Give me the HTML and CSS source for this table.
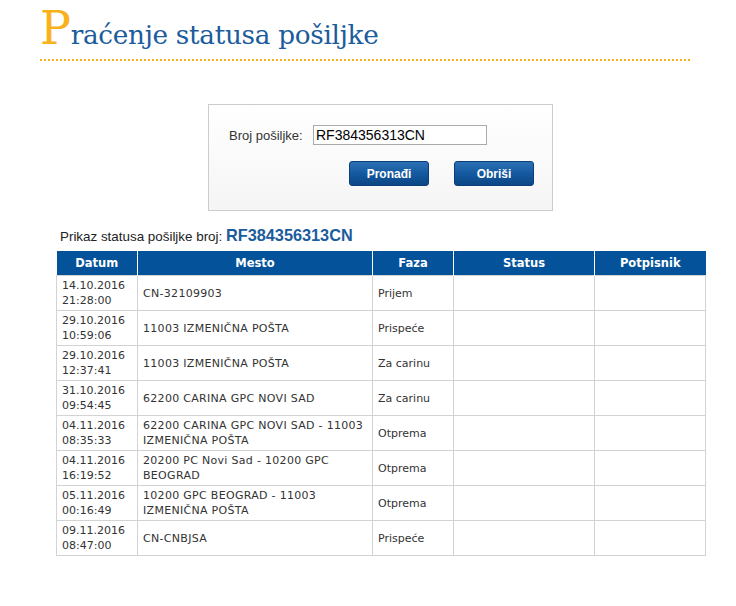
FILE: index.html
```html
<!DOCTYPE html>
<html lang="sr">
<head>
<meta charset="utf-8">
<title>Praćenje statusa pošiljke</title>
<link rel="stylesheet" href="styles.css">
</head>
<body>
<div class="page">
  <h1 class="title"><span class="cap">P</span>raćenje statusa pošiljke</h1>
  <div class="search">
    <div class="field-row">
      <label class="label" for="broj">Broj pošiljke:</label>
      <input class="input" id="broj" type="text" value="RF384356313CN">
    </div>
    <div class="btn-row">
      <button class="btn">Pronađi</button>
      <button class="btn">Obriši</button>
    </div>
  </div>
  <div class="results">
    <p class="caption">Prikaz statusa pošiljke broj: <span class="num">RF384356313CN</span></p>
    <table class="grid">
      <colgroup>
        <col class="c-date"><col class="c-place"><col class="c-phase"><col class="c-status"><col class="c-sign">
      </colgroup>
      <thead>
        <tr><th>Datum</th><th>Mesto</th><th>Faza</th><th>Status</th><th>Potpisnik</th></tr>
      </thead>
      <tbody>
        <tr><td>14.10.2016<br>21:28:00</td><td class="place">CN-32109903</td><td>Prijem</td><td></td><td></td></tr>
        <tr><td>29.10.2016<br>10:59:06</td><td class="place">11003 IZMENIČNA POŠTA</td><td>Prispeće</td><td></td><td></td></tr>
        <tr><td>29.10.2016<br>12:37:41</td><td class="place">11003 IZMENIČNA POŠTA</td><td>Za carinu</td><td></td><td></td></tr>
        <tr><td>31.10.2016<br>09:54:45</td><td class="place">62200 CARINA GPC NOVI SAD</td><td>Za carinu</td><td></td><td></td></tr>
        <tr><td>04.11.2016<br>08:35:33</td><td class="place">62200 CARINA GPC NOVI SAD - 11003 IZMENIČNA POŠTA</td><td>Otprema</td><td></td><td></td></tr>
        <tr><td>04.11.2016<br>16:19:52</td><td class="place">20200 PC Novi Sad - 10200 GPC BEOGRAD</td><td>Otprema</td><td></td><td></td></tr>
        <tr><td>05.11.2016<br>00:16:49</td><td class="place">10200 GPC BEOGRAD - 11003 IZMENIČNA POŠTA</td><td>Otprema</td><td></td><td></td></tr>
        <tr><td>09.11.2016<br>08:47:00</td><td class="place">CN-CNBJSA</td><td>Prispeće</td><td></td><td></td></tr>
      </tbody>
    </table>
  </div>
</div>
</body>
</html>
```
FILE: styles.css
```css
html, body { margin: 0; padding: 0; background: #fff; }
.page { width: 681px; padding-left: 40px; padding-top: 5px; }
.title {
  margin: 0;
  width: 650px;
  font-family: "DejaVu Serif", Georgia, serif;
  font-weight: normal;
  font-size: 26.3px;
  line-height: 46px;
  color: #1b5c9c;
  border-bottom: 2px dotted #f9b21b;
  padding-bottom: 1px;
  letter-spacing: -0.3px;
}
.cap { font-size: 46px; color: #f9b21b; }
.search {
  width: 343px;
  height: 105px;
  margin: 43px auto 0;
  border: 1px solid #ccc;
  background: linear-gradient(#fff, #f5f5f5);
  font-family: "Liberation Sans", Arial, sans-serif;
  box-sizing: content-box;
}
.field-row { display: flex; align-items: center; padding: 20px 0 0 20px; }
.label { font-size: 13px; color: #333; width: 84px; flex: none; }
.input {
  flex: none;
  width: 174px; height: 20px; box-sizing: border-box;
  border: 1px solid #aaa; padding: 0 2px;
  font-family: "Liberation Sans", Arial, sans-serif; font-size: 14px; color: #000;
}
.btn-row { display: flex; gap: 25px; padding: 16px 0 0 140px; }
.btn {
  width: 80px; height: 25px;
  border: 1px solid #0b3e78; border-radius: 3px;
  background: linear-gradient(#2c70b4, #1459a0 50%, #0c4685);
  color: #fff; font-family: "Liberation Sans", Arial, sans-serif; font-weight: bold; font-size: 12px;
  padding: 0;
}
.results { padding: 0 16px; }
.caption {
  margin: 14px 0 4px 4px;
  font-family: "Liberation Sans", Arial, sans-serif;
  font-size: 13.4px; color: #222;
  line-height: 20px;
}
.num { font-weight: bold; font-size: 16.3px; color: #1b5c9c; }
.grid {
  width: 649px;
  border-collapse: collapse;
  font-family: "DejaVu Sans", Verdana, sans-serif;
  font-size: 11px;
  table-layout: fixed;
}
.c-date { width: 81px; }
.c-place { width: 235px; }
.c-phase { width: 81px; }
.c-status { width: 141px; }
.c-sign { width: 111px; }
.grid th {
  background: #03529a; color: #fff; font-weight: bold; font-size: 11.5px;
  height: 24px; padding: 0; border-left: 1px solid #fff; text-align: center;
}
.grid th:first-child { border-left: none; }
.grid td {
  border: 1px solid #d3d3d3;
  padding: 2px 5px 2px 5px;
  line-height: 15px; height: 30px;
  color: #333; vertical-align: middle;
}
.grid td.place { letter-spacing: 0.3px; }
```
